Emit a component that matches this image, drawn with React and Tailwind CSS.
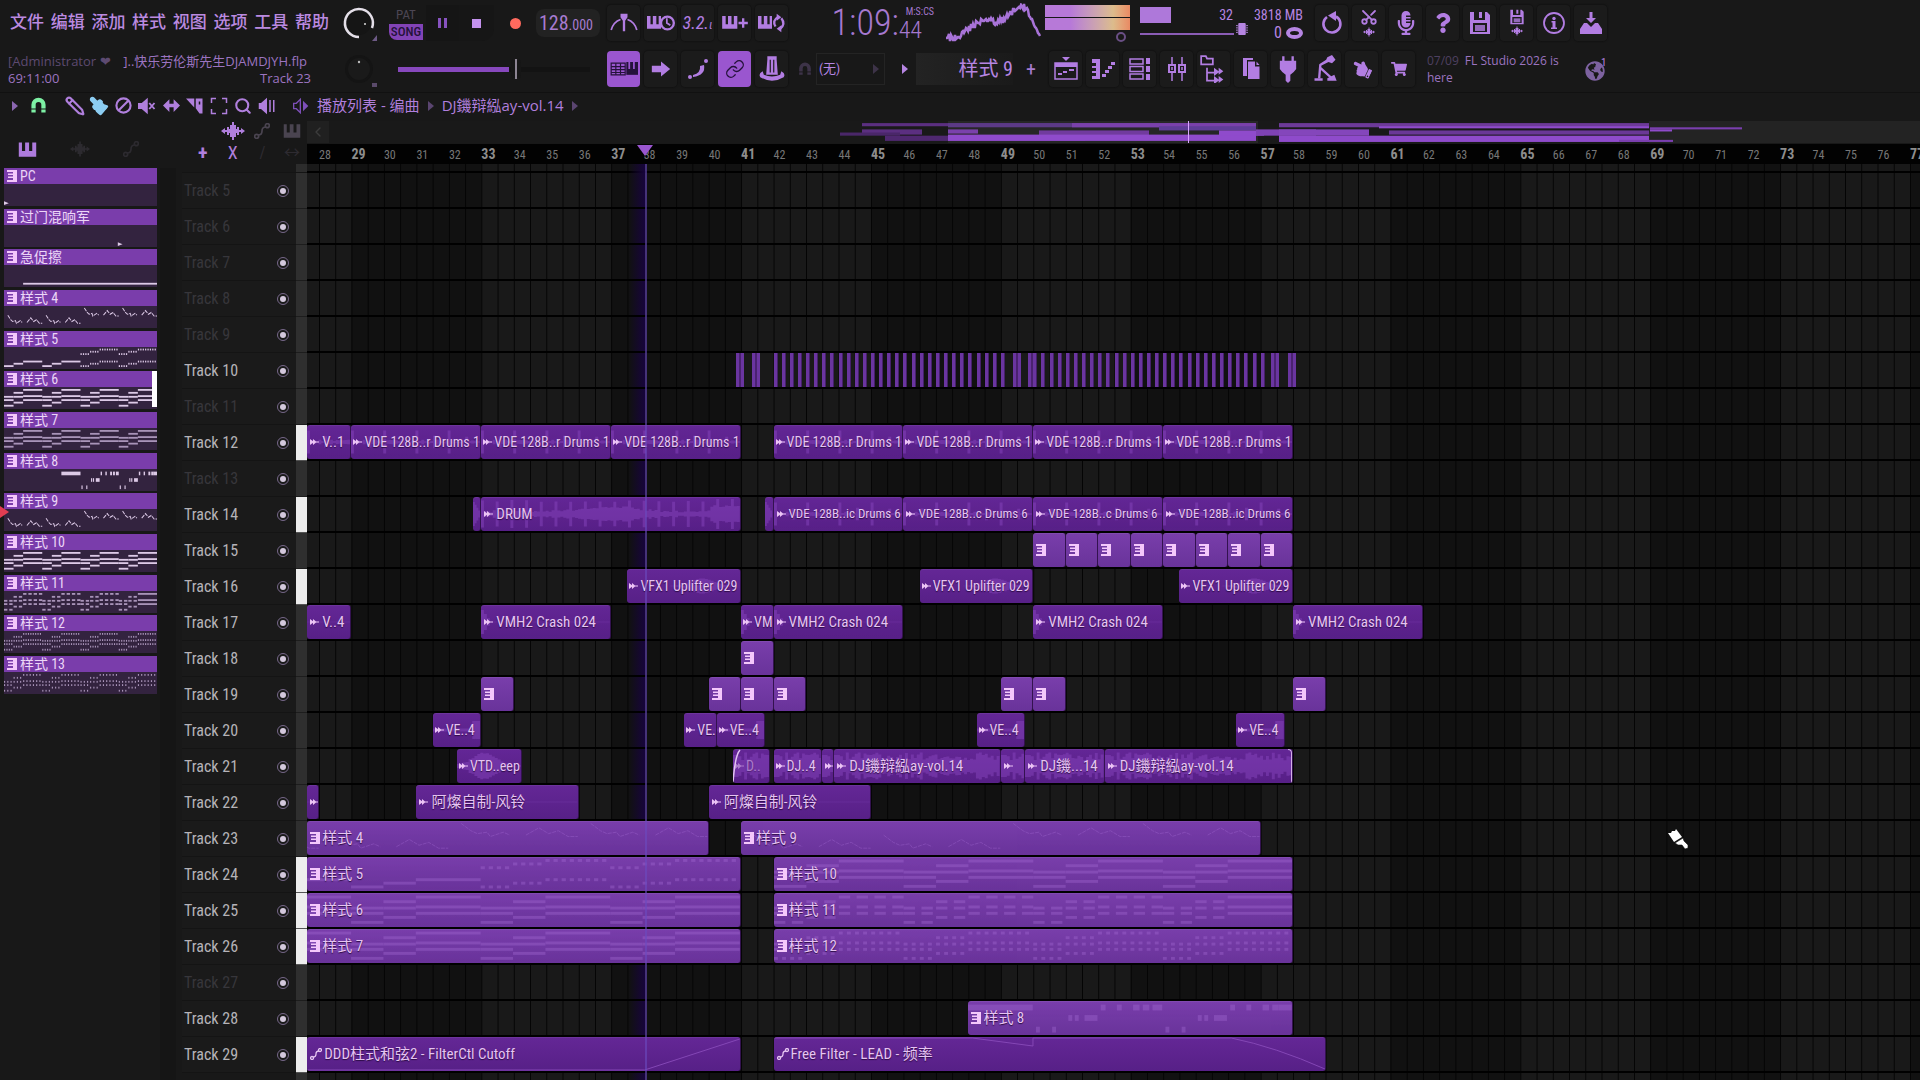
import React from 'react';
import { Scissors, Link, Search, Pencil, Paintbrush, ChevronLeft } from 'lucide-react';
import { FaQuestion, FaMicrophoneAlt, FaShoppingCart, FaHandPointLeft, FaGlobeAmericas, FaMicrochip } from 'react-icons/fa';
import clsx from 'clsx';

// Timeline zoom: pixels per bar, and where bar 28 starts inside a lane
const BAR = 32.47;
const FIRST_BAR = 28;
const FIRST_X = 12;
const toX = (bar) => FIRST_X + (bar - FIRST_BAR) * BAR;

/* ---------- note data, x and w in bars (0-16), y from 0 to 1 ---------- */

const phrases = [0, 4, 8, 12];
const chords = phrases.flatMap((p) => [
  { x: p, y: 0.46, w: 1 }, { x: p, y: 0.64, w: 1 }, { x: p, y: 0.95, w: 1 },
  { x: p + 1, y: 0.24, w: 1 }, { x: p + 1, y: 0.46, w: 1 }, { x: p + 1, y: 0.78, w: 1 },
  { x: p + 2, y: 0.08, w: 2 }, { x: p + 2, y: 0.42, w: 2 }, { x: p + 2, y: 0.64, w: 2 },
]);

const chop = (notes, step, size, until = 16) =>
  notes.flatMap((n) => {
    if (n.x >= until) return [n];
    const out = [];
    for (let i = 0; i < n.w - 0.01; i += step) out.push({ ...n, x: n.x + i, w: size });
    return out;
  });

const bassSteps = (p, shift) => [
  { x: p, y: 0.97 - shift, w: 1 }, { x: p + 1, y: 0.84 - shift, w: 1 }, { x: p + 2, y: 0.72 - shift, w: 2 },
];

const ticks = (y, list) => list.map(([x, w]) => ({ x, y, w, tall: true }));

const NOTES = {
  line: [{ x: 2, y: 0.95, w: 14 }],
  bass: [
    ...bassSteps(0, 0), ...bassSteps(4, 0),
    ...chop([...bassSteps(8, 0), ...bassSteps(12, 0), ...bassSteps(8, 0.66), ...bassSteps(12, 0.66)], 0.25, 0.13),
  ],
  chords,
  stab: chop(chords, 0.55, 0.35, 14),
  dots: chop(chords, 0.25, 0.12),
  sparse: chop(chords, 0.34, 0.12, 15),
  lead: [
    ...ticks(0.14, [[6, 2], [10.1, 0.15], [10.6, 0.15], [11.1, 0.2], [11.4, 0.2], [11.7, 0.3], [14.1, 0.15], [14.6, 0.15], [15.1, 0.2], [15.4, 0.2], [15.6, 0.4]]),
    ...ticks(0.5, [[9.1, 0.12], [9.3, 0.12], [9.6, 0.4], [13.1, 0.12], [13.3, 0.12], [13.6, 0.4]]),
    ...ticks(0.9, [[8.1, 0.12], [8.6, 0.12], [12.1, 0.12], [12.6, 0.12]]),
  ],
};

const MELODY = [[0, 9], [40, 9], [80, 1], [120, 1]]
  .map(([x, y]) => `M${x + 4} ${y}l3 5l2 2l3 -1l1 3l4 -3l2 2M${x + 24} ${y + 8}l4 -5l3 4l3 -2l3 4l3 0`)
  .join('');

function Notes({ kind, color, from = 0, bars = 16 }) {
  return (
    <svg className="block h-full w-full" viewBox={`${from * 10} 0 ${bars * 10} 22`} preserveAspectRatio="none" fill={color}>
      {kind === 'melody' && <path d={MELODY} fill="none" stroke={color} strokeWidth="1" strokeDasharray="4 1" vectorEffect="non-scaling-stroke" />}
      {kind === 'hit' && <path d="M0 18l5 2l-5 2z" />}
      {kind === 'lateHit' && <path d="M119 18l5 2l-5 2z" />}
      {(NOTES[kind] || []).map((n, i) => (
        <rect key={i} x={n.x * 10} y={n.tall ? n.y * 20 - 1 : n.y * 20 - 0.5} width={n.w * 10} height={n.tall ? 4 : 2} />
      ))}
    </svg>
  );
}

const rand = (n) => {
  const v = Math.sin(n * 127.1 + 11.7) * 43758.5453;
  return v - Math.floor(v);
};

// Amplitude of each kind of sample, t goes from 0 to the clip's length in bars
const SHAPES = {
  beat: (t, i) => Math.max(0.04, 0.85 - ((t * 2) % 1) * 5) * 0.8 + rand(i) * 0.12,
  drum: (t, i) => (i % 5 === 0 ? 0.8 : 0.1 + 0.3 * Math.exp(-((t - 4) ** 2))) + rand(i) * 0.15 + (t > 7 ? 0.35 : 0),
  riser: (t) => 0.5 * Math.exp(-(((t - 2.3) / 0.5) ** 2)),
  crash: (t) => Math.max(0.02, 0.8 - t * 3),
  sweep: (t, i) => 0.8 * Math.exp(-(((t - 0.8) / 0.5) ** 2)) + rand(i) * 0.1,
  song: (t, i) => 0.35 + rand(i) * 0.55,
  chime: () => 0.02,
  fx: (t) => (t > 1.2 ? 0.6 : 0.1),
};

function Wave({ shape, bars }) {
  const n = Math.max(4, Math.round(bars * 11));
  let d = '';
  for (let i = 0; i < n; i++) {
    const a = Math.min(1, SHAPES[shape]((i / n) * bars, i)) * 15;
    d += `M${i + 0.5} ${17 - a}V${17 + a}`;
  }
  return (
    <svg className="block h-full w-full opacity-45" viewBox={`0 0 ${n} 34`} preserveAspectRatio="none">
      <path d={d} stroke="#8a48c0" strokeWidth="1" />
    </svg>
  );
}

/* ---------- tracks ---------- */

const TEXT = { normal: 'text-[15px]', tight: 'text-[14px]', tiny: 'text-[13px]' };

const a = (start, end, name, wave, text) => ({ type: 'audio', start, end, name, wave, text });
const p = (start, end, name = '', notes, from = 0) => ({ type: 'pattern', start, end, name, notes, from });
const START = 27.64;

const drums1 = 'VDE 128B..r Drums 1';
const TRACKS = [
  { n: 5, off: true }, { n: 6, off: true }, { n: 7, off: true }, { n: 8, off: true }, { n: 9, off: true },
  { n: 10, stripes: true, clips: [] },
  { n: 11, off: true },
  {
    n: 12, lit: true,
    clips: [
      a(START, 29, 'V..1', 'beat'), a(29, 33, drums1, 'beat', 'tight'), a(33, 37, drums1, 'beat', 'tight'), a(37, 41, drums1, 'beat', 'tight'),
      a(42, 46, drums1, 'beat', 'tight'), a(46, 50, drums1, 'beat', 'tight'), a(50, 54, drums1, 'beat', 'tight'), a(54, 58, drums1, 'beat', 'tight'),
    ],
  },
  { n: 13, off: true },
  {
    n: 14, lit: true,
    clips: [
      a(32.75, 33, '', 'crash'), a(33, 41, 'DRUM', 'drum'), a(41.75, 42, '', 'crash'),
      a(42, 46, 'VDE 128B..ic Drums 6', 'beat', 'tiny'), a(46, 50, 'VDE 128B..c Drums 6', 'beat', 'tiny'),
      a(50, 54, 'VDE 128B..c Drums 6', 'beat', 'tiny'), a(54, 58, 'VDE 128B..ic Drums 6', 'beat', 'tiny'),
    ],
  },
  { n: 15, clips: [50, 51, 52, 53, 54, 55, 56, 57].map((b) => p(b, b + 1)) },
  { n: 16, lit: true, clips: [37.5, 46.5, 54.5].map((b) => a(b, b + 3.5, 'VFX1 Uplifter 029', 'riser', 'tight')) },
  {
    n: 17,
    clips: [
      a(START, 29, 'V..4', 'chime'), a(33, 37, 'VMH2 Crash 024', 'crash'), a(41, 42, 'VM', 'crash', 'tight'),
      a(42, 46, 'VMH2 Crash 024', 'crash'), a(50, 54, 'VMH2 Crash 024', 'crash'), a(58, 62, 'VMH2 Crash 024', 'crash'),
    ],
  },
  { n: 18, clips: [p(41, 42)] },
  { n: 19, clips: [33, 40, 41, 42, 49, 50, 58].map((b) => p(b, b + 1)) },
  {
    n: 20,
    clips: [
      a(31.5, 33, 'VE..4', 'fx', 'tight'), a(39.25, 40.25, 'VE.', 'chime', 'tight'), a(40.25, 41.75, 'VE..4', 'fx', 'tight'),
      a(48.25, 49.75, 'VE..4', 'fx', 'tight'), a(56.25, 57.75, 'VE..4', 'fx', 'tight'),
    ],
  },
  {
    n: 21,
    clips: [
      a(32.25, 34.25, 'VTD..eep', 'sweep', 'tight'), { ...a(40.75, 41.9, 'D..', 'song', 'tight'), fadeIn: true },
      a(42, 43.5, 'DJ..4', 'song', 'tight'), a(43.5, 43.87, ' ', 'song'), a(43.87, 49, 'DJ鐖辩紭ay-vol.14', 'song'),
      a(49, 49.75, ' ', 'song'), a(49.75, 52.2, 'DJ鐖...14', 'song'), { ...a(52.2, 58, 'DJ鐖辩紭ay-vol.14', 'song'), fadeOut: true },
    ],
  },
  { n: 22, clips: [a(START, 28, ' ', 'chime'), a(31, 36, '阿燦自制-风铃', 'chime'), a(40, 45, '阿燦自制-风铃', 'chime')] },
  { n: 23, clips: [p(START, 40, '样式 4', 'melody', 3.64), p(41, 57, '样式 9', 'melody')] },
  { n: 24, lit: true, clips: [p(START, 41, '样式 5', 'bass', 2.64), p(42, 58, '样式 10', 'chords')] },
  { n: 25, lit: true, clips: [p(START, 41, '样式 6', 'chords', 2.64), p(42, 58, '样式 11', 'stab')] },
  { n: 26, lit: true, clips: [p(START, 41, '样式 7', 'chords', 2.64), p(42, 58, '样式 12', 'dots')] },
  { n: 27, off: true },
  { n: 28, clips: [p(48, 58, '样式 8', 'lead', 6)] },
  {
    n: 29, lit: true,
    clips: [
      { type: 'auto', start: START, end: 41, name: 'DDD柱式和弦2 - FilterCtl Cutoff', curve: 'M0 33H78L100 2' },
      { type: 'auto', start: 42, end: 59, name: 'Free Filter - LEAD - 频率', curve: 'M0 1H36L47 9V1H83Q91 10 100 32' },
    ],
  },
];

const PATTERNS = [
  { name: 'PC', notes: 'hit' }, { name: '过门混响军', notes: 'lateHit' }, { name: '急促擦', notes: 'line' },
  { name: '样式 4', notes: 'melody' }, { name: '样式 5', notes: 'bass' }, { name: '样式 6', notes: 'chords', selected: true },
  { name: '样式 7', notes: 'chords', dim: true }, { name: '样式 8', notes: 'lead' }, { name: '样式 9', notes: 'melody', playing: true },
  { name: '样式 10', notes: 'chords' }, { name: '样式 11', notes: 'stab', dim: true }, { name: '样式 12', notes: 'dots', dim: true },
  { name: '样式 13', notes: 'sparse', dim: true },
];

/* ---------- small icons ---------- */

const Svg = ({ size = 'size-6', box = 24, children, className }) => (
  <svg className={clsx(size, 'shrink-0', className)} viewBox={`0 0 ${box} ${box}`} fill="currentColor">{children}</svg>
);

const StepIcon = () => (
  <svg className="h-3 w-[10px] shrink-0" viewBox="0 0 10 12" fill="#f4c8fb">
    <path d="M0 0H10V12H0V10H6V8H1V6.500H6V5H1V3.500H6V2H0z" />
  </svg>
);
const SampleIcon = () => (
  <svg className="h-2 w-[9px] shrink-0" viewBox="0 0 9 8" fill="#ecc4f5">
    <path d="M0 1L3 3.300V1L6 3.400H9V4.600H6L3 7V4.700L0 7z" />
  </svg>
);
const CurveIcon = ({ className = 'size-3' }) => (
  <svg className={clsx(className, 'shrink-0')} viewBox="0 0 12 12" fill="none" stroke="currentColor" strokeWidth="1.300">
    <circle cx="2" cy="10" r="1.500" /><circle cx="10" cy="2" r="1.500" /><path d="M3 9Q6 9 6 6T9 3" />
  </svg>
);
const WaveIcon = ({ className = 'size-6' }) => (
  <Svg size={className}>
    <path d="M0 12l4-3v2h2V8h2v2h1V6h2V3h2v3h2v4h1V8h2v3h2V9l4 3l-4 3v-2h-2v3h-2v-2h-1v4h-2v3h-2v-3H9v-4H8v2H6v-3H4v2z" />
  </Svg>
);
const PianoIcon = ({ className = 'size-5' }) => (
  <Svg size={className}><path d="M1 3H5V14H9V3H10V3H14V14H18V3H23V21H1z" /></Svg>
);
const MagnetIcon = ({ className }) => (
  <Svg size={className}>
    <path d="M5 22V11A7 7 0 0 1 19 11V22" fill="none" stroke="currentColor" strokeWidth="6" />
    <path d="M1 17H9M15 17H23" stroke="#181818" strokeWidth="1.500" />
  </Svg>
);
const SaveIcon = ({ className = 'size-6' }) => (
  <Svg size={className}><path fillRule="evenodd" d="M2 1H19L22 4V23H2zM6 1V9H17V1H14V7H11V1zM5 12V21H19V12z" /><path d="M7 14H17V20H7z" opacity=".8" /></Svg>
);
const Arrow = ({ className }) => (
  <svg className={clsx('h-[10px] w-[6px] shrink-0', className)} viewBox="0 0 6 10" fill="currentColor"><path d="M0 0L6 5L0 10z" /></svg>
);

const ICONS = {
  metronome: <Svg size="size-7"><path d="M9 4h6v3l-2 3V19h-2V10L9 7z" /><path d="M1 18Q3 11 9 9M23 18Q21 11 15 9" fill="none" stroke="currentColor" strokeWidth="1.500" /></Svg>,
  waitInput: <Svg size="size-7"><path d="M0 6H3V13H5V6H8V13H10V6H12V17H0z" /><circle cx="17.500" cy="12" r="5.500" fill="none" stroke="currentColor" strokeWidth="2" /><path d="M17 8V12L20 14" fill="none" stroke="currentColor" strokeWidth="1.500" /></Svg>,
  countdown: <span className="text-lg italic leading-none">3.2.<span className="text-xs">ι</span></span>,
  overdub: <Svg size="size-7"><path d="M1 6H4V13H6V6H9V13H11V6H14V17H1zM18 8h2v3h3v2h-3v3h-2v-3h-3v-2h3z" /></Svg>,
  loopRec: <Svg size="size-7"><path d="M0 6H3V13H5V6H8V13H10V6H12V17H0z" /><path d="M15 15Q12 10 17 7M20 8Q24 13 19 17" fill="none" stroke="currentColor" strokeWidth="2" /><path d="M16 4l4 3l-4 3zM20 14l-4 3l4 3z" /></Svg>,
  pianoRoll: <Svg size="size-7"><path d="M1 7H13V17H1z" fill="none" stroke="currentColor" strokeWidth="1" /><path d="M1 10H13M1 12.500H13M1 15H13M5 7V17M9 7V17" stroke="currentColor" strokeWidth="1" /><path d="M14 6H24V17H14z" /><path d="M16.500 6v6M20.500 6v6" stroke="#9a56cf" strokeWidth="1.500" /></Svg>,
  arrow: <Svg size="size-5"><path d="M1 8H12V3L23 12L12 21V16H1z" /></Svg>,
  slide: <Svg size="size-6"><circle cx="4" cy="20" r="2" /><path d="M7 20Q20 18 18 8L14 9Q15 16 7 18z" /><circle cx="20" cy="4" r="2" /></Svg>,
  link: <Link className="size-5" strokeWidth={1.6} />,
  hat: <Svg size="size-7"><path d="M8 1H16V4L17 17H7L8 4z" /><path d="M4 14Q0 16 2 19Q12 25 22 19Q24 16 20 14L19 17Q12 20 5 17z" /><path d="M10.500 4V15M13.500 4V15" stroke="#1b1b1b" /></Svg>,
  undo: <Svg><path d="M16 5.500A8.500 8.500 0 1 1 7 6" fill="none" stroke="currentColor" strokeWidth="2.600" /><path d="M16 0V10L8 4.500z" /></Svg>,
  cut: <span className="flex flex-col items-center"><Scissors className="size-[18px] -rotate-90" strokeWidth={2.4} /><WaveIcon className="size-3" /></span>,
  mic: <FaMicrophoneAlt className="size-6" />,
  help: <FaQuestion className="size-5" />,
  save: <SaveIcon />,
  saveWave: <span className="flex flex-col items-center"><SaveIcon className="size-4" /><WaveIcon className="size-3" /></span>,
  info: <Svg><circle cx="12" cy="12" r="10" fill="none" stroke="currentColor" strokeWidth="1.800" /><circle cx="12" cy="7.500" r="1.700" /><path d="M9.500 10H13.500V16.500H15V18H9V16.500H10.500V11.500H9.500z" /></Svg>,
  exportZip: <Svg><path d="M10.500 1H13.500V7H17L12 12L7 7H10.500z" /><path d="M5 12H8L12 16L16 12H19L23 18V23H1V18z" /></Svg>,
  playlist: <Svg><path d="M8 0h8l-4 4z" /><path d="M1 6H23V22H1z" fill="none" stroke="currentColor" strokeWidth="1.500" /><path d="M1 6H23V10H1z" /><path d="M4 16h4v2H4zM9 14h4v2H9zM15 12h5v2h-5z" /></Svg>,
  roll: <Svg><path d="M1 2H9V22H1V19H5V16H1V14H5V11H1V9H5V6H1z" /><path d="M11 17h4v3h-4zM14 13h4v3h-4zM17 9h4v3h-4zM20 5h4v3h-4z" /></Svg>,
  rack: <Svg><path d="M2 2H15V7H2zM2 9.500H15V14.500H2zM2 17H15V22H2z" fill="none" stroke="currentColor" strokeWidth="1.500" /><path d="M18 1h4v6h-4zM18 9h4v6h-4zM18 17h4v6h-4z" /></Svg>,
  mixer: <Svg><path d="M7 0V24M17 0V24" stroke="currentColor" strokeWidth="1.500" /><path d="M4 8H10V15H4zM14 8H20V15H14z" fill="#1b1b1b" stroke="currentColor" strokeWidth="2" /><path d="M7 10v3M17 10v3" stroke="currentColor" strokeWidth="1.500" /></Svg>,
  browser: <Svg size="size-7"><path d="M1 1H5L6 3H11V8H1z M6 11V22H12M6 15H12" fill="none" stroke="currentColor" strokeWidth="1.500" /><path d="M12 11l4 3v-3l4 3l-4 3v-2l-4 3zM12 18l4 3v-3l4 3l-4 3v-2l-4 3z" /></Svg>,
  files: <Svg><path d="M4 1H14V3H8V19H4z" /><path d="M9 4.500H16V9.500H20.500V22H9zM17.500 4.500L20.500 8H17.500z" /></Svg>,
  plug: <Svg size="size-7"><path d="M7 1h2v4h6V1h2v4h2v7q-2 3-5 5v5l-2 2l-2-2v-5q-3-2-5-5V5h2z" /></Svg>,
  tempo: <Svg size="size-7"><path d="M14 2L18 0L21 4L18 7L15 6L9 9L7 8L13 4z" /><path d="M8 8L7 20M8 11L19 21" stroke="currentColor" strokeWidth="2" /><path d="M3 20H10V22H3zM14 20L20 17L22 22H14z" /></Svg>,
  touch: <FaHandPointLeft className="size-5 rotate-[25deg]" />,
  shop: <FaShoppingCart className="size-4" />,
};

function Tool({ icon, label, active }) {
  return (
    <div className="flex w-[37px] shrink-0 items-center justify-center">
      <button
        aria-label={label || icon}
        className={clsx(
          'flex h-9 w-[33px] items-center justify-center rounded-sm',
          active ? 'bg-[#9a56cf] text-[#24123a]' : 'bg-[#1b1b1b] text-[#b27de2] shadow-[0_0_1px_1px_#131313]',
        )}
      >
        {ICONS[icon]}
      </button>
    </div>
  );
}

/* ---------- header ---------- */

const SCOPE = Array.from({ length: 95 }, (_, i) => {
  const y = 34 - i * 0.36 + Math.sin(i / 7) * 3 + (rand(i) - 0.5) * 7 + (i > 78 ? (i - 78) * 1.8 : 0);
  return `${i},${Math.round(y)}`;
}).join(' ');

function TopRow() {
  return (
    <div className="flex h-[46px] items-center">
      <nav className="flex w-[331px] shrink-0 justify-between pl-[10px] pr-[2px] text-[17px] font-medium text-[#bb8ae0]">
        {['文件', '编辑', '添加', '样式', '视图', '选项', '工具', '帮助'].map((m) => <button key={m} className="whitespace-nowrap">{m}</button>)}
      </nav>
      <div className="flex w-[55px] shrink-0 justify-center">
        <svg className="size-9" viewBox="0 0 36 36" fill="none">
          <circle cx="18" cy="18" r="12" fill="#151515" />
          <path d="M18 32A14 14 0 1 1 31 23" stroke="#e4dfe8" strokeWidth="2.500" />
          <circle cx="24" cy="19" r="1" fill="#ddd" />
          <path d="M36 30v6h-5z" fill="#6d5a85" />
        </svg>
      </div>
      <div className="flex w-10 shrink-0 flex-col items-center gap-px text-[13px] leading-4">
        <button className="text-[#4c4654]">PAT</button>
        <button className="w-[34px] rounded-bl-lg bg-[#8243b6] font-medium text-[#24123a]">SONG</button>
      </div>
      <button aria-label="Pause" className="flex h-9 w-[33px] shrink-0 items-center justify-center gap-[3px] bg-[#151515]">
        <span className="h-[10px] w-[3px] bg-[#8753c0]" /><span className="h-[10px] w-[3px] bg-[#8753c0]" />
      </button>
      <button aria-label="Stop" className="flex h-9 w-[35px] shrink-0 items-center justify-center rounded-br-xl bg-[#161616]">
        <span className="size-[9px] bg-[#c492ee]" />
      </button>
      <button aria-label="Record" className="flex h-9 w-[42px] shrink-0 items-center justify-center">
        <span className="size-[11px] rounded-full bg-[#ff6a5e]" />
      </button>
      <button className="flex h-7 w-16 shrink-0 items-baseline justify-center rounded-lg bg-[#222] pr-1 text-[20px] leading-7 text-[#a77bd0]">
        128<span className="text-[14px]">.000</span>
      </button>
      <div className="ml-[5px] flex">
        <Tool icon="metronome" /><Tool icon="waitInput" /><Tool icon="countdown" /><Tool icon="overdub" /><Tool icon="loopRec" />
      </div>
      <div className="flex w-[156px] shrink-0 items-center justify-end pr-6 text-[#a678d0]">
        <span className="text-[36px] font-light leading-[46px]">1:09:</span>
        <span className="flex flex-col items-end pt-px">
          <span className="-mr-3 text-[10px] leading-3">M:S:CS</span>
          <span className="text-[24px] font-light leading-6">44</span>
        </span>
      </div>
      <svg className="h-10 w-[95px] shrink-0" viewBox="0 0 95 40"><polyline points={SCOPE} fill="none" stroke="#a873d8" strokeWidth="2.500" /></svg>
      <div className="ml-1 flex w-[85px] shrink-0 flex-col gap-px text-[#6a4f85]">
        <span className="h-3 bg-linear-to-r from-[#b779d8] from-30% via-[#dcbc8c] via-80% to-[#e98a63]" />
        <span className="h-3 bg-linear-to-r from-[#b779d8] from-30% via-[#dcbc8c] via-80% to-[#e98a63]" />
        <span className="mr-1 mt-px size-[10px] self-end rounded-full border-2 border-current" />
      </div>
      <div className="ml-[10px] flex w-[112px] shrink-0 flex-col text-[14px] leading-4 text-[#b685e2]">
        <div className="flex items-start"><span className="h-4 w-[31px] bg-[#ae78da]" /><span className="ml-auto mr-[19px]">32</span></div>
        <div className="flex h-4 items-start"><span className="mt-[10px] h-[2px] w-[94px] bg-[#8a5cb5]" /><FaMicrochip className="ml-[2px] size-3" /></div>
      </div>
      <div className="flex w-[51px] shrink-0 flex-col items-end text-[14px] leading-5 text-[#b685e2]">
        <span className="whitespace-nowrap">3818 MB</span>
        <span className="flex items-center gap-1 text-base leading-4">0 <span className="h-3 w-[17px] rounded-[50%] border-[4px] border-[#b685e2]" /></span>
      </div>
      <div className="ml-[10px] flex">
        <Tool icon="undo" /><Tool icon="cut" /><Tool icon="mic" /><Tool icon="help" /><Tool icon="save" /><Tool icon="saveWave" /><Tool icon="info" /><Tool icon="exportZip" />
      </div>
    </div>
  );
}

function SecondRow() {
  return (
    <div className="flex h-[46px] items-center">
      <div className='w-[331px] shrink-0 pl-2 pr-5 pt-px font-["Open_Sans","Noto_Sans_CJK_SC",sans-serif] text-[13px] leading-[17px] text-[#9c74c0]'>
        <div className="flex justify-between whitespace-nowrap pr-1"><span className="text-[#5d4a70]">[Administrator ❤</span><span>]..快乐劳伦斯先生DJAMDJYH.flp</span></div>
        <div className="flex justify-between"><span>69:11:00</span><span>Track 23</span></div>
      </div>
      <div className="flex w-[55px] shrink-0 justify-center">
        <svg className="size-9" viewBox="0 0 36 36">
          <circle cx="18" cy="18" r="14" fill="#141414" /><circle cx="18" cy="18" r="11" fill="#1a1a1a" />
          <circle cx="18" cy="11" r="1.200" fill="#bbb" /><path d="M31 32h6v4h-6z" fill="#5a4a6a" />
        </svg>
      </div>
      <div className="flex w-[219px] shrink-0 items-center pl-3">
        <input
          type="range" aria-label="Master pitch" defaultValue="62" min="0" max="100"
          className="h-[5px] w-48 appearance-none bg-linear-to-r from-[#8748bd] from-58% to-[#131313] to-58% [&::-webkit-slider-thumb]:h-5 [&::-webkit-slider-thumb]:w-[10px] [&::-webkit-slider-thumb]:appearance-none [&::-webkit-slider-thumb]:rounded-sm [&::-webkit-slider-thumb]:border-x-4 [&::-webkit-slider-thumb]:border-[#161616] [&::-webkit-slider-thumb]:bg-[#8c8492]"
        />
      </div>
      <div className="flex">
        <Tool icon="pianoRoll" active /><Tool icon="arrow" /><Tool icon="slide" /><Tool icon="link" active /><Tool icon="hat" />
      </div>
      <label className="flex w-[97px] shrink-0 items-center pl-2 text-[#3d3348]">
        <MagnetIcon className="mr-1 size-[14px]" />
        <select aria-label="Snap" className="h-8 w-[69px] appearance-none border border-[#242424] bg-[#181818] pl-[2px] text-[13px] text-[#b685e2]">
          <option>(无)</option>
        </select>
        <Arrow className="-ml-3" />
      </label>
      <button aria-label="Pattern menu" className="ml-2 flex h-8 w-5 shrink-0 items-center justify-center text-[#b685e2]"><Arrow /></button>
      <button className="ml-px h-8 w-[97px] shrink-0 bg-linear-to-r from-[#232323] to-[#1a1a1a] text-right text-[20px] leading-8 text-[#b685e2]">样式 9</button>
      <button aria-label="Add pattern" className="ml-2 h-8 w-5 shrink-0 text-xl leading-8 text-[#a77bd0]">+</button>
      <div className="ml-[6px] flex">
        <Tool icon="playlist" /><Tool icon="roll" /><Tool icon="rack" /><Tool icon="mixer" /><Tool icon="browser" />
        <Tool icon="files" /><Tool icon="plug" /><Tool icon="tempo" /><Tool icon="touch" /><Tool icon="shop" />
      </div>
      <a href="#news" className='ml-[10px] flex w-[140px] shrink-0 flex-col whitespace-nowrap font-["Open_Sans",sans-serif] text-[12px] leading-[17px] text-[#9c74c0]'>
        <span className="flex gap-[6px]"><span className="text-[#4e4060]">07/09</span><span>FL Studio 2026 is</span></span>
        <span>here</span>
      </a>
      <span className="ml-[18px] flex items-start text-[#7d62a0]"><FaGlobeAmericas className="mt-1 size-5" /><span className="-ml-1 text-[11px] leading-3 text-[#b685e2]">1</span></span>
    </div>
  );
}

function PlaylistBar() {
  const tools = [
    ['Draw', <Pencil className="size-5 -scale-x-100" strokeWidth={2.6} />],
    ['Paint', <Paintbrush className="size-5 -scale-x-100 fill-[#8ccdf2] text-[#8ccdf2]" />],
    ['Delete', <Svg size="size-[17px]"><g fill="none" stroke="currentColor" strokeWidth="3"><circle cx="12" cy="12" r="10" /><path d="M5 19L19 5" /></g></Svg>],
    ['Mute', <Svg size="size-[18px]"><path d="M0 8H5L13 1V23L5 16H0z" /><path d="M15 8l7 8M22 8l-7 8" stroke="currentColor" strokeWidth="2.500" /></Svg>],
    ['Slip', <Svg size="size-[17px]"><path d="M0 12L9 3V9.500H15V3L24 12L15 21V14.500H9V21z" /></Svg>],
    ['Slice', <Svg size="size-[18px]"><path d="M0 2H11L11 14z" /><path fillRule="evenodd" d="M13 2H22V22H18L13 15zM17 6V10H19V6z" /></Svg>],
    ['Select', <Svg size="size-[18px]"><path d="M2 8V2H8M16 2H22V8M22 16V22H16M8 22H2V16" fill="none" stroke="currentColor" strokeWidth="2" /></Svg>],
    ['Zoom', <Search className="size-[18px]" strokeWidth={2.8} />],
    ['Playback', <Svg size="size-[18px]"><path d="M1 8H4L12 1V23L4 16H1zM15 4h2v16h-2zM20 4h2v16h-2z" /></Svg>],
  ];
  return (
    <div className="flex h-7 shrink-0 items-center border-t border-[#111] pb-[2px] text-[#b07fdd]">
      <Arrow className="ml-3 text-[#8a66b0]" />
      <button aria-label="Snap" className="ml-3"><MagnetIcon className="size-[17px] text-[#7df0a4]" /></button>
      <div className="ml-4 flex">
        {tools.map(([name, icon]) => (
          <button key={name} aria-label={name} className="flex w-6 items-center justify-center">{icon}</button>
        ))}
      </div>
      <Svg size="size-4" className="ml-[14px] text-[#7d4fb8]"><path d="M1 8H5L11 2V22L5 16H1z" fill="none" stroke="currentColor" strokeWidth="2" /><path d="M15 4l8 8l-8 8z" /></Svg>
      <div className='ml-2 flex items-center gap-2 whitespace-nowrap font-["Open_Sans","Noto_Sans_CJK_SC",sans-serif] text-[15px]'>
        <span>播放列表 - 编曲</span><Arrow className="text-[#5a4570]" />
        <span>DJ鐖辩紭ay-vol.14</span><Arrow className="text-[#5a4570]" />
      </div>
    </div>
  );
}

/* ---------- picker ---------- */

function Picker() {
  return (
    <aside className="flex w-[182px] shrink-0 flex-col">
      <div className="flex h-12 shrink-0 items-center gap-[33px] pl-[18px] pt-[10px] text-[#2c2a2f]">
        <PianoIcon className="size-[19px] text-[#ae7bdd]" /><WaveIcon className="size-5" /><CurveIcon className="size-4" />
      </div>
      <div className="flex flex-1">
        <div className="flex h-[526px] w-[157px] flex-col justify-between pl-1">
          {PATTERNS.map((pt) => (
            <button key={pt.name} className="relative block h-[38px] text-left">
              <div className="flex h-4 items-center gap-[3px] bg-[#7a3dab] pl-[3px] text-[14px] leading-4 text-[#ecd6f7]">
                <StepIcon />{pt.name}
              </div>
              <div className={clsx('h-[22px] bg-[#33233f] py-px', pt.dim && 'bg-[#3b2949]')}>
                <Notes kind={pt.notes} color={pt.dim ? '#a893b8' : '#dcc9e6'} />
              </div>
              {pt.selected && <span className="absolute right-0 top-0 h-9 w-[5px] bg-white" />}
              {pt.playing && <span className="absolute -left-1 top-[13px] border-y-[6px] border-l-[9px] border-y-transparent border-l-[#e23d52]" />}
            </button>
          ))}
        </div>
        <div className="mx-[3px] w-4 bg-[#151515]" />
      </div>
    </aside>
  );
}

/* ---------- playlist ---------- */

// [x, y, width, height, colour] of each strip in the song overview
const OVERVIEW = [
  [533, 2, 212, 3, '#5b2f80'], [533, 8, 60, 5, '#5b2f80'], [511, 11, 60, 3, '#4a2769'], [556, 14, 200, 5, '#4f2870'],
  [619, 2, 308, 4, '#5c3a86'], [743, 2, 184, 4, '#7a41ab'], [619, 8, 30, 4, '#7a41ab'], [710, 9, 110, 5, '#713b9e'], [830, 5, 97, 4, '#5f3d98'],
  [619, 13, 308, 6, '#8f4bcb'], [890, 9, 45, 5, '#8f4bcb'], [927, 8, 60, 6, '#7e42b3'],
  [950, 2, 370, 4, '#6d3a99'], [1050, 5, 270, 2, '#8f4bcb'], [950, 8, 90, 6, '#8446bb'], [1060, 9, 260, 4, '#6a3896'],
  [950, 14, 370, 6, '#8f4bcb'], [1321, 6, 92, 2, '#7a3fae'], [1321, 8, 22, 2, '#8f4bcb'], [1290, 18, 54, 2, '#7a3fae'],
];

function Overview() {
  return (
    <div className="flex h-6 shrink-0 py-px">
      <button aria-label="Scroll left" className="flex w-[22px] items-center justify-center bg-[#202020] text-[#3c3c3c]"><ChevronLeft className="size-4" /></button>
      <svg className="h-[22px] min-w-0 flex-1 bg-[#191919]" viewBox="0 0 1591 21" preserveAspectRatio="none">
        <rect x="619" width="310" height="21" fill="#262626" />
        <rect x="1320" width="271" height="21" fill="#232323" />
        {OVERVIEW.map(([x, y, w, h, c], i) => <rect key={i} x={x} y={y} width={w} height={h} fill={c} />)}
        <rect x="859" width="1" height="21" fill="#d9a5ff" />
      </svg>
    </div>
  );
}

function Ruler() {
  const bars = Array.from({ length: 50 }, (_, i) => FIRST_BAR + i);
  return (
    <div className="relative flex h-5 shrink-0 items-center overflow-hidden bg-[#020202] pt-px" style={{ paddingLeft: FIRST_X }}>
      {bars.map((b) => (
        <span key={b} className={clsx('shrink-0', b % 4 === 1 ? 'text-[14px] font-bold text-[#8d8d8d]' : 'text-[12px] text-[#777]')} style={{ width: BAR }}>{b}</span>
      ))}
      <span className="absolute top-px -ml-2 border-x-8 border-t-[11px] border-x-transparent border-t-[#9a56cf]" style={{ left: toX(38.03) }} />
    </div>
  );
}

function Clip({ clip }) {
  const { type, start, end, name, text = 'normal', fadeIn, fadeOut } = clip;
  const pattern = type === 'pattern';
  return (
    <div
      className={clsx(
        'absolute top-0 h-[34px] overflow-hidden rounded-[3px] border-r border-[#33124f] shadow-[inset_0_1px_0_#ffffff10]',
        pattern ? 'bg-linear-to-b from-[#793eab] to-[#69339a]' : 'bg-linear-to-b from-[#642796] to-[#572087]',
      )}
      style={{ left: toX(start), width: (end - start) * BAR }}
    >
      <div className="absolute inset-0">
        {pattern && clip.notes && <div className="h-full py-px opacity-40"><Notes kind={clip.notes} color="#a066d0" from={clip.from} bars={end - start} /></div>}
        {type === 'audio' && <Wave shape={clip.wave} bars={end - start} />}
        {type === 'auto' && (
          <svg className="h-full w-full" viewBox="0 0 100 34" preserveAspectRatio="none">
            <path d={clip.curve} fill="none" stroke="#8447b5" strokeWidth="1" vectorEffect="non-scaling-stroke" />
          </svg>
        )}
        {fadeIn && <svg className="absolute left-0 top-0 h-full w-2" viewBox="0 0 8 34"><path d="M0 34Q2 6 7 1" fill="none" stroke="#e3c4f2" strokeWidth="1.500" /></svg>}
        {fadeOut && <span className="absolute right-0 top-0 h-full w-1 rounded-tr-lg border-r border-t border-[#d3aee6]" />}
      </div>
      <div
        className={clsx(
          'relative flex h-full items-center whitespace-nowrap text-[#e6c4f2] [text-shadow:0_1px_1px_#2b0c44]',
          TEXT[text],
          text === 'tight' ? 'pl-[2px]' : 'pl-[3px]',
          type === 'audio' && text !== 'tight' ? 'gap-[3px]' : 'gap-[2px]',
          fadeIn && 'opacity-50',
        )}
      >
        {pattern && <StepIcon />}
        {type === 'audio' && name && <SampleIcon />}
        {type === 'auto' && <CurveIcon />}
        <span>{name}</span>
      </div>
    </div>
  );
}

// Track 10 is filled with quarter-bar hits, in thin slices
const single = (from, to) => Array.from({ length: Math.round((to - from) * 4) }, (_, i) => from + i / 4);
const HITS = [
  ...[40.85, 41.34, 49.36, 49.84, 57.33, 57.83].map((b) => [b, 8]),
  ...[...single(42, 49.25), ...single(50, 57.25)].map((b) => [b, 4]),
];

function Lanes() {
  const grid = {
    backgroundImage: 'linear-gradient(90deg, #040404 1px, transparent 1px), linear-gradient(90deg, #111111 50%, #191919 50%)',
    backgroundSize: `${BAR / 2}px 100%, ${BAR * 8}px 100%`,
    backgroundPosition: `${toX(29)}px 0, ${toX(29)}px 0`,
  };
  const head = toX(38.03);
  return (
    <div className="relative min-w-0 flex-1 overflow-hidden" style={grid}>
      <span className="absolute inset-y-0 -ml-4 w-4 bg-linear-to-r from-transparent to-[#17043c]" style={{ left: head }} />
      <div className="h-[9px] border-b-2 border-black" />
      {TRACKS.map((t) => (
        <div key={t.n} className="relative h-9 border-b-2 border-black">
          {t.stripes && HITS.map(([b, w]) => (
            <span
              key={b}
              className={clsx('absolute top-0 h-[34px]', w === 8 ? 'border-x-[3px] border-[#6a35a0] bg-[#4a2270]' : 'border-r border-[#45206a] bg-[#6a35a0]')}
              style={{ left: toX(b), width: w }}
            />
          ))}
          {t.clips?.map((c) => <Clip key={c.start} clip={c} />)}
        </div>
      ))}
      <div className="h-9 border-b-2 border-black" />
      <span className="absolute inset-y-0 w-[2px] bg-[#6a4bc0] opacity-60" style={{ left: head }} />
      <svg className="absolute left-[1361px] top-[664px] h-[22px] w-5" viewBox="0 0 20 22" fill="#fff">
        <path d="M0 5L3 5L4 3L7 3L8 1L14 9L6 14z" /><path d="M7 15L15 10L16 13L20 17V20L17 21L14 17L10 17z" stroke="#111" strokeWidth=".6" />
      </svg>
    </div>
  );
}

function TrackHeads() {
  return (
    <div className="w-[125px] shrink-0">
      <div className="h-[9px] border-b border-[#141414]"><div className="ml-auto h-full w-[11px] bg-[#2c2c2c]" /></div>
      {TRACKS.map((t) => (
        <div key={t.n} className="flex h-9">
          <div className="flex flex-1 items-center justify-between border-b border-[#141414] bg-[#1a1a1a] pl-[2px] pr-[7px]">
            <span className={clsx('text-[16px]', t.off ? 'text-[#37363b]' : 'text-[#b5b3b8]')}>Track {t.n}</span>
            <button aria-label={`Mute track ${t.n}`} className="flex size-3 items-center justify-center rounded-full border border-[#77688a]">
              <span className="size-[6px] rounded-full bg-[#d3c8dc]" />
            </button>
          </div>
          <span className={clsx('w-[11px] border-b', t.lit ? 'border-[#555] bg-[#ededed]' : 'border-[#1d1d1d] bg-[#2f2f2f]')} />
        </div>
      ))}
      <div className="ml-auto h-9 w-[11px] bg-[#2f2f2f]" />
    </div>
  );
}

export default function App() {
  return (
    <div className='flex h-screen flex-col overflow-hidden bg-[#181818] font-["Roboto_Condensed","Noto_Sans_CJK_SC",sans-serif] text-[#b685e2]'>
      <header className="shrink-0">
        <TopRow />
        <SecondRow />
      </header>
      <PlaylistBar />
      <main className="flex min-h-0 flex-1">
        <Picker />
        <section className="flex min-w-0 flex-1 flex-col">
          <div className="flex h-11 shrink-0">
            <div className="grid w-[125px] shrink-0 grid-cols-4 grid-rows-2 place-items-center pl-[6px] text-[#b07fdd]">
              <span /><WaveIcon className="size-6" /><CurveIcon className="size-4 text-[#4a4450]" /><PianoIcon className="size-[18px] text-[#4a4450]" />
              <button aria-label="Add" className="text-xl font-bold leading-5">+</button>
              <button aria-label="Close" className="text-lg leading-5">X</button>
              <span className="text-[#2e2b31]">/</span><span className="text-[#2e2b31]">↔</span>
            </div>
            <div className="flex min-w-0 flex-1 flex-col">
              <Overview />
              <Ruler />
            </div>
          </div>
          <div className="flex min-h-0 flex-1">
            <TrackHeads />
            <Lanes />
          </div>
        </section>
      </main>
    </div>
  );
}
